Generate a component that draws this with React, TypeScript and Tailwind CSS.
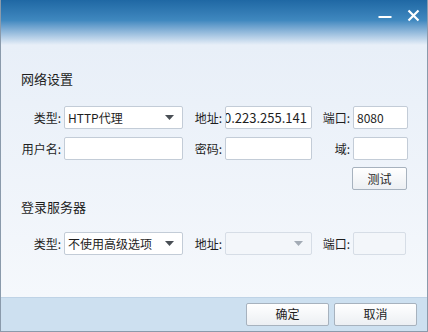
import React from "react";

const font = { fontFamily: '"Noto Sans CJK SC", "Liberation Sans", sans-serif' };

function Label({ children }: { children: React.ReactNode }) {
  return <div className="text-right pr-[3px] text-[12px] leading-[23px] text-[#1e1e1e]">{children}</div>;
}

function Box({ children, disabled, className = "" }: { children?: React.ReactNode; disabled?: boolean; className?: string }) {
  return (
    <div className={`h-[23px] rounded-[2px] border flex items-center overflow-hidden text-[12px] text-[#1e1e1e] ${disabled ? "bg-[#f3f6fa] border-[#d6dde6]" : "bg-white border-[#c3ccd7]"} ${className}`}>
      {children}
    </div>
  );
}

function Arrow({ light }: { light?: boolean }) {
  return (
    <svg width="9" height="5" viewBox="0 0 9 5" className="ml-auto mr-[8px] shrink-0">
      <path d="M0 0h9L4.5 5z" fill={light ? "#a3abb5" : "#4a4f55"} />
    </svg>
  );
}

function Select({ value, disabled }: { value?: string; disabled?: boolean }) {
  return (
    <Box disabled={disabled}>
      <span className="pl-[3px] whitespace-nowrap">{value}</span>
      <Arrow light={disabled} />
    </Box>
  );
}

function Btn({ children, className = "" }: { children: React.ReactNode; className?: string }) {
  return (
    <div className={`h-[23px] rounded-[2px] border border-[#a7b2be] bg-gradient-to-b from-white to-[#eceff3] flex items-center justify-center text-[12px] text-[#1e1e1e] ${className}`}>
      {children}
    </div>
  );
}

export default function App() {
  return (
    <div style={font} className="w-[428px] h-[332px] flex flex-col border-x border-b border-[#8a9aab] bg-[#eaf1f9] overflow-hidden">
      <div className="h-[45px] shrink-0 relative bg-gradient-to-b from-[#1f68a4] via-[#3f88bf] via-45% to-[#e8eff8]">
        <svg className="absolute left-[377px] top-[15px]" width="14" height="4" viewBox="0 0 14 4">
          <rect x="0.5" y="1" width="13" height="2" fill="#fff" />
        </svg>
        <svg className="absolute left-[406px] top-[9px]" width="13" height="13" viewBox="0 0 13 13">
          <path d="M1.5 1.5l10 10M11.5 1.5l-10 10" stroke="#fff" strokeWidth="2.2" />
        </svg>
      </div>

      <div className="flex-1 bg-gradient-to-b from-[#e8eff8] to-[#f5f8fc] pl-[20px] pt-[25px]">
        <div className="text-[13px] leading-[18px] text-[#1e1e1e]">网络设置</div>
        <div className="grid grid-cols-[43px_119px_42px_87px_41px_55px] gap-y-[8px] mt-[18px]">
          <Label>类型:</Label>
          <Select value="HTTP代理" />
          <Label>地址:</Label>
          <Box>
            {/* value is scrolled to its end, left part clipped */}
            <div dir="rtl" className="w-full overflow-hidden whitespace-nowrap text-right text-[13px] pr-[4px]">60.223.255.141</div>
          </Box>
          <Label>端口:</Label>
          <Box><span className="pl-[3px]">8080</span></Box>

          <Label>用户名:</Label>
          <Box />
          <Label>密码:</Label>
          <Box />
          <Label>域:</Label>
          <Box />
        </div>
        <div className="flex justify-end pr-[20px] mt-[7px]">
          <Btn className="w-[55px]">测试</Btn>
        </div>
        <div className="text-[13px] leading-[18px] text-[#1e1e1e] mt-[8px]">登录服务器</div>
        <div className="grid grid-cols-[43px_119px_42px_87px_41px_53px] mt-[16px]">
          <Label>类型:</Label>
          <Select value="不使用高级选项" />
          <Label>地址:</Label>
          <Select disabled />
          <Label>端口:</Label>
          <Box disabled />
        </div>
      </div>

      <div className="h-[34px] shrink-0 bg-[#cde0f0] border-t border-[#bfd3e6] flex items-center justify-end gap-[5px] pr-[10px] pb-[1px]">
        <Btn className="w-[83px]">确定</Btn>
        <Btn className="w-[83px]">取消</Btn>
      </div>
    </div>
  );
}
